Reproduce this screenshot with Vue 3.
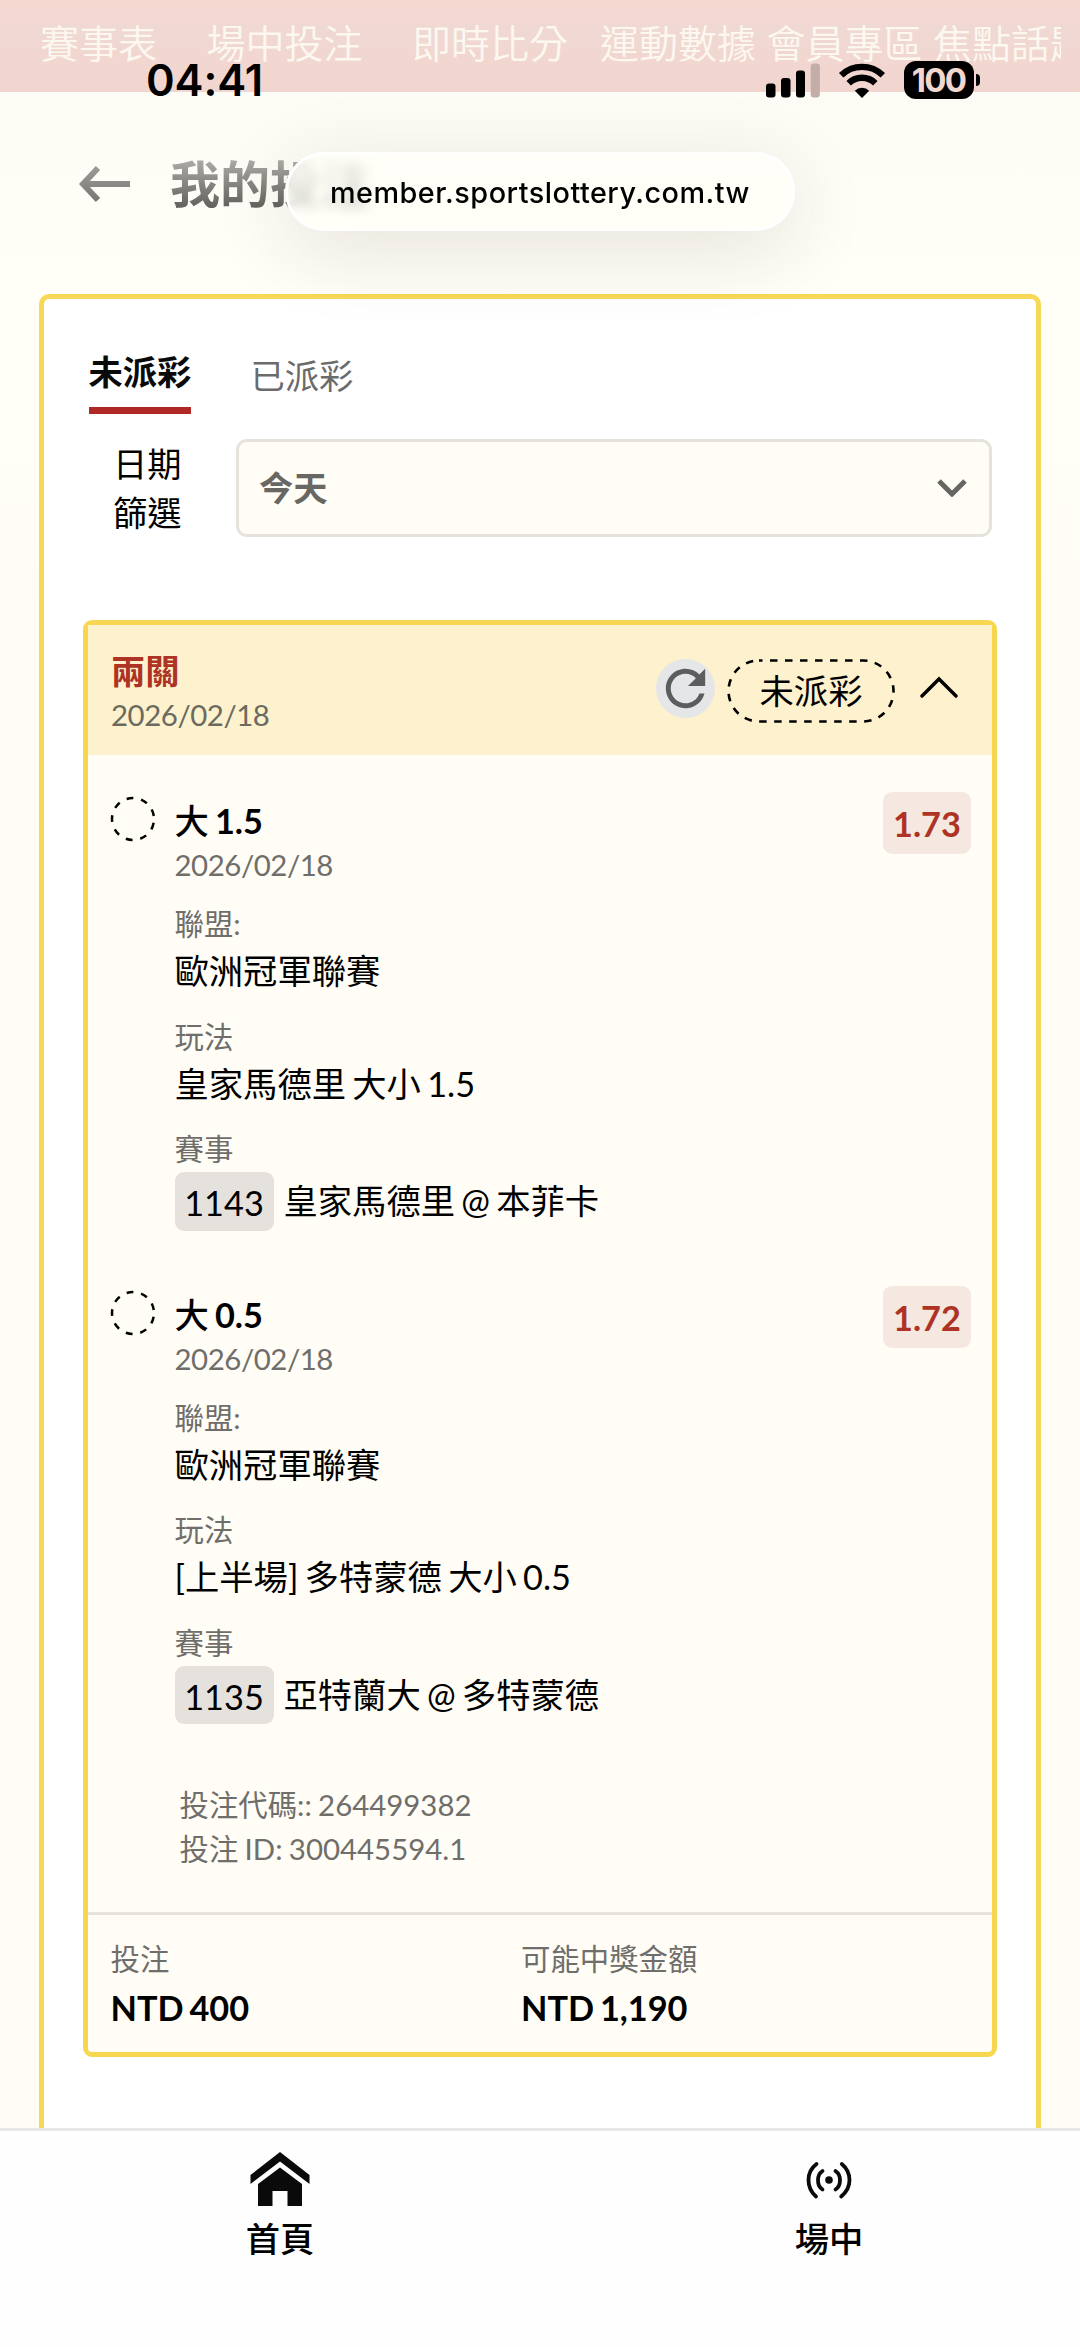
<script setup>
  import { ref } from 'vue'

  const navItems = [
    { name: '賽事表', size: 'wide' },
    { name: '場中投注', size: 'wide' },
    { name: '即時比分', size: 'mid' },
    { name: '運動數據', size: 'tight' },
    { name: '會員專區', size: 'tight' },
    { name: '焦點話題', size: 'tight' }
  ]

  const tabs = ['未派彩', '已派彩']
  const activeTab = ref('未派彩')
  const open = ref(true)

  const legs = [
    {
      side: '大',
      line: '1.5',
      date: '2026/02/18',
      odds: '1.73',
      league: '歐洲冠軍聯賽',
      market: '皇家馬德里 大小 1.5',
      code: '1143',
      match: '皇家馬德里 @ 本菲卡'
    },
    {
      side: '大',
      line: '0.5',
      date: '2026/02/18',
      odds: '1.72',
      league: '歐洲冠軍聯賽',
      market: '[上半場] 多特蒙德 大小 0.5',
      code: '1135',
      match: '亞特蘭大 @ 多特蒙德'
    }
  ]
</script>

<template>
  <div class="screen">
    <nav class="top-nav">
      <a v-for="item in navItems" :key="item.name" :class="item.size">{{ item.name }}</a>
    </nav>

    <header class="page-header">
      <svg class="back" width="52" height="38" viewBox="0 0 52 38">
        <defs>
          <linearGradient id="fade" x1="0" y1="0" x2="0" y2="38" gradientUnits="userSpaceOnUse">
            <stop offset="0" stop-color="#9d9c98" />
            <stop offset="1" stop-color="#777672" />
          </linearGradient>
        </defs>
        <path d="M19 3 L4 19 L19 35 M4 18.99 L51 19" fill="none" stroke="url(#fade)" stroke-width="6" />
      </svg>
      <h1>我的投注</h1>
    </header>

    <main class="panel">
      <div class="tabs">
        <button
          v-for="tab in tabs"
          :key="tab"
          :class="{ active: tab === activeTab }"
          @click="activeTab = tab"
        >{{ tab }}</button>
      </div>

      <div class="filter">
        <label>日期<br>篩選</label>
        <div class="select">
          <span>今天</span>
          <svg width="30" height="18" viewBox="0 0 30 18">
            <path d="M2 2 L15 15 L28 2" fill="none" stroke="#666561" stroke-width="5" />
          </svg>
        </div>
      </div>

      <section class="ticket">
        <div class="ticket-header">
          <div>
            <div class="ticket-title">兩關</div>
            <div class="date">2026/02/18</div>
          </div>
          <div class="actions">
            <button class="refresh">
              <svg width="59" height="59" viewBox="0 0 24 24">
                <path fill="#5b5d5f" d="M17.65 6.35C16.2 4.9 14.21 4 12 4c-4.42 0-7.99 3.58-7.99 8s3.57 8 7.99 8c3.73 0 6.84-2.55 7.73-6h-2.08c-.82 2.33-3.04 4-5.65 4-3.31 0-6-2.69-6-6s2.69-6 6-6c1.66 0 3.14.69 4.22 1.78L13 11h7V4l-2.35 2.35z" />
              </svg>
            </button>
            <div class="status">
              <svg width="168" height="64" viewBox="0 0 168 64">
                <rect x="1.5" y="1.5" width="165" height="61" rx="30.5" fill="none" stroke="#000" stroke-width="2.6" stroke-dasharray="7.5 7.5" stroke-dashoffset="4" />
              </svg>
              <span>未派彩</span>
            </div>
            <button class="toggle" @click="open = !open">
              <svg width="38" height="22" viewBox="0 0 38 22">
                <path d="M2 20 L19 3 L36 20" fill="none" stroke="#000" stroke-width="3.4" stroke-linecap="round" />
              </svg>
            </button>
          </div>
        </div>

        <div v-if="open" class="legs">
          <div v-for="leg in legs" :key="leg.code" class="leg">
            <svg class="pending" width="46" height="46" viewBox="0 0 46 46">
              <circle cx="23" cy="23" r="21" fill="none" stroke="#000" stroke-width="2.5" stroke-dasharray="6.8 7.86" stroke-dashoffset="-3.93" />
            </svg>
            <div class="leg-body">
              <div class="pick">{{ leg.side }} <b>{{ leg.line }}</b></div>
              <div class="date">{{ leg.date }}</div>
              <div class="field">
                <div class="label">聯盟:</div>
                <div class="value">{{ leg.league }}</div>
              </div>
              <div class="field">
                <div class="label">玩法</div>
                <div class="value">{{ leg.market }}</div>
              </div>
              <div class="field">
                <div class="label">賽事</div>
                <div class="match">
                  <span class="code">{{ leg.code }}</span>
                  <span class="value">{{ leg.match }}</span>
                </div>
              </div>
            </div>
            <div class="odds">{{ leg.odds }}</div>
          </div>
          <div class="ids">
            <div>投注代碼:: 264499382</div>
            <div>投注 ID: 300445594.1</div>
          </div>
        </div>

        <div class="amounts">
          <div>
            <div class="label">投注</div>
            <div class="amount">NTD 400</div>
          </div>
          <div>
            <div class="label">可能中獎金額</div>
            <div class="amount">NTD 1,190</div>
          </div>
        </div>
      </section>
    </main>

    <footer class="bottom-nav">
      <a>
        <svg width="60" height="56" viewBox="0 0 60 56">
          <path d="M30 0 L59.5 23 V32 L30 9.5 L0.5 32 V23 Z" fill="#0a0a0a" />
          <path d="M30 15.5 L52 32 V54 H37.5 V39 H22.5 V54 H8 V32 Z" fill="#0a0a0a" />
        </svg>
        <span>首頁</span>
      </a>
      <a>
        <svg width="60" height="56" viewBox="0 0 60 56">
          <g fill="none" stroke="#0a0a0a" stroke-width="3.8" stroke-linecap="round">
            <path d="M17.5 12 Q9.5 18 9.5 28 T17 44.5" />
            <path d="M23.5 19 Q19 22 19 28.2 T23.5 37.5" />
            <path d="M36.5 19 Q41 22 41 28.2 T36.5 37.5" />
            <path d="M42.8 12 Q50.5 18.5 50.5 28 T42.2 44.5" />
          </g>
          <circle cx="30" cy="28" r="3.8" fill="#0a0a0a" />
        </svg>
        <span>場中</span>
      </a>
    </footer>

    <!-- phone chrome floating over the page -->
    <div class="status-bar">
      <span class="time">04:41</span>
      <div class="indicators">
        <svg width="54" height="35" viewBox="0 0 54 35">
          <rect x="0" y="20.5" width="9.5" height="14" rx="3" />
          <rect x="15" y="15" width="9.5" height="19.5" rx="3" />
          <rect x="30" y="7.5" width="9" height="27" rx="3" />
          <rect x="44.7" y="0.5" width="9.2" height="34" rx="3" fill="#c2ada8" />
        </svg>
        <svg width="48" height="35" viewBox="0 0 48 35">
          <path d="M3.2 12.3 A30 30 0 0 1 44.8 12.3" fill="none" stroke="#000" stroke-width="6.4" />
          <path d="M10.7 20.2 A19 19 0 0 1 37.3 20.2" fill="none" stroke="#000" stroke-width="6.4" />
          <path d="M24 35 L16.8 27.8 A10.2 10.2 0 0 1 31.2 27.8 Z" />
        </svg>
        <div class="battery">100</div>
      </div>
    </div>
    <div class="address">member.sportslottery.com.tw</div>
  </div>
</template>

<style>
body {
  margin: 0;
}
</style>

<style scoped>
.screen {
  position: relative;
  display: flex;
  flex-direction: column;
  width: 1080px;
  height: 2347px;
  overflow: hidden;
  background: linear-gradient(#fbfaf4, #fffef7 300px, #fffdf6 600px);
  color: #000;
  font-family: Lato, "Noto Sans CJK TC", sans-serif;
  font-size: 34.3px;
}

.screen svg {
  display: block;
  flex: none;
}

button {
  border: 0;
  padding: 0;
  background: none;
  font: inherit;
}

.top-nav {
  display: flex;
  flex: none;
  box-sizing: border-box;
  height: 92px;
  padding-left: 40px;
  border-right: 19px solid transparent;
  background: linear-gradient(#f5d7d0, #f0d9d3 30px, #f2d6d0 60px, #f1d5cf);
  color: #fcf8f0;
  font-size: 39px;
  font-weight: 350;
  line-height: 86px;
  white-space: nowrap;
  overflow: hidden;
}

.top-nav .wide {
  margin-right: 49.5px;
}

.top-nav .mid {
  margin-right: 32px;
}

.top-nav .tight {
  margin-right: 10.5px;
}

.page-header {
  display: flex;
  flex: none;
  align-items: center;
  box-sizing: border-box;
  height: 202px;
  padding: 0 0 18px 79px;
}

.page-header h1 {
  margin: 0 0 0 39px;
  font-size: 50px;
  font-weight: 700;
  line-height: 64px;
  background: linear-gradient(#a9a8a4 15%, #64635f 85%);
  background-clip: text;
  color: transparent;
}

.panel {
  flex: 1;
  min-height: 0;
  margin: 0 39px;
  padding: 50px 39px 0;
  border: 5px solid #f8d957;
  border-bottom: 0;
  border-radius: 10px 10px 0 0;
  background: #fff;
}

.tabs {
  display: flex;
  gap: 59px;
  height: 65px;
  padding-left: 5.5px;
}

.tabs button {
  height: 40px;
  margin-top: 7px;
  line-height: 40px;
  color: #6b6b6b;
}

.tabs .active {
  height: 65px;
  margin-top: 0;
  padding: 0 0 12px;
  border-bottom: 7px solid #b02823;
  line-height: 46px;
  font-weight: 700;
  color: #0a0a0a;
}

.filter {
  display: flex;
  justify-content: space-between;
  margin-top: 25px;
  padding: 0 5px 0 30px;
  line-height: 49px;
}

.select {
  display: flex;
  align-items: center;
  justify-content: space-between;
  box-sizing: border-box;
  width: 756px;
  height: 98px;
  padding: 0 22px 0 20px;
  border: 3px solid #e6e3dc;
  border-radius: 11px;
  background: #fffdf6;
  color: #686763;
  font-weight: 700;
}

.select span {
  margin-bottom: 2px;
}

.ticket {
  margin-top: 83px;
  box-sizing: border-box;
  height: 1437px;
  border: 5px solid #f8d750;
  border-radius: 9px;
  background: #fffdf6;
}

.ticket-header {
  display: flex;
  justify-content: space-between;
  box-sizing: border-box;
  height: 130px;
  padding: 24px 34px 0 23px;
  background: #fdf2cd;
  line-height: 44px;
}

.ticket-title {
  color: #ae3324;
  font-weight: 700;
}

.date {
  color: #6b6a60;
  font-size: 29.4px;
  letter-spacing: -0.45px;
  line-height: 44px;
}

.actions {
  display: flex;
  align-items: center;
  height: 84px;
}

.refresh {
  margin: 0 12px 5px 0;
  border-radius: 50%;
  background: #e4e6e8;
}

.status {
  position: relative;
  display: grid;
  place-items: center;
  width: 168px;
  height: 64px;
}

.status svg {
  position: absolute;
  inset: 0;
}

.toggle {
  margin: 0 0 8px 25px;
}

.legs {
  padding: 44px 21px 0 21.5px;
}

.leg {
  display: flex;
  margin-bottom: 62px;
}

.pending {
  margin: -3px 19px 0 0;
}

.leg-body {
  flex: 1;
}

.pick {
  font-weight: 500;
  line-height: 44px;
  word-spacing: -2.5px;
}

.leg .date,
.label,
.ids {
  color: #6f6e6b;
}

.field {
  margin-top: 15px;
}

.field + .field {
  margin-top: 18.5px;
}

.label {
  font-size: 29.4px;
  line-height: 44px;
}

.value {
  line-height: 50px;
  word-spacing: -2.5px;
}

.match {
  display: flex;
  align-items: center;
  margin-top: 1px;
}

.match .value {
  margin-left: 10px;
}

.code {
  box-sizing: border-box;
  width: 99px;
  height: 58.5px;
  border-radius: 9px;
  background: #e5e2dd;
  line-height: 61px;
  text-align: center;
}

.odds {
  width: 88px;
  height: 62px;
  margin-top: -7px;
  border-radius: 9px;
  background: #f5e8e0;
  color: #ae3324;
  font-weight: 700;
  line-height: 63px;
  text-align: center;
}

.ids {
  padding-left: 70px;
  margin-top: -3px;
  font-size: 29.4px;
  line-height: 44px;
  word-spacing: -1.2px;
}

.amounts {
  display: grid;
  grid-template-columns: 410.5px 1fr;
  margin-top: 41px;
  padding: 22px 0 0 22.5px;
  border-top: 3px solid #e6e3dc;
}

.amount {
  padding-top: 2px;
  font-weight: 700;
  line-height: 50px;
  word-spacing: -2.5px;
}

.bottom-nav {
  display: grid;
  flex: none;
  grid-template-columns: 549px 549px;
  box-sizing: border-box;
  height: 219px;
  padding: 21px 0 0 5.5px;
  border-top: 3px solid #e8e8e8;
  background: #fefefe;
  font-weight: 500;
}

.bottom-nav a {
  display: flex;
  flex-direction: column;
  align-items: center;
  line-height: 48px;
}

.bottom-nav span {
  margin-top: 7px;
}

.status-bar {
  position: absolute;
  top: 59px;
  left: 146px;
  right: 100px;
  display: flex;
  align-items: center;
  justify-content: space-between;
  height: 42px;
  font-family: Inter, sans-serif;
}

.time {
  font-size: 43.5px;
  font-weight: 600;
  letter-spacing: -0.1px;
}

.indicators {
  display: flex;
  align-items: center;
  gap: 18px;
}

.battery {
  position: relative;
  width: 70px;
  height: 38px;
  margin-right: 6.5px;
  border-radius: 12px;
  background: #000;
  color: #f2d6d0;
  font-size: 33px;
  font-weight: 700;
  letter-spacing: -1.8px;
  line-height: 38px;
  text-align: center;
}

.battery::after {
  content: "";
  position: absolute;
  top: 13px;
  right: -6.5px;
  width: 4.5px;
  height: 12px;
  border-radius: 0 6px 6px 0;
  background: #000;
}

.address {
  position: absolute;
  top: 152px;
  left: 285px;
  box-sizing: border-box;
  width: 510px;
  height: 79px;
  border: 3px solid #fff;
  border-radius: 40px;
  background: rgba(255, 255, 248, 0.72);
  backdrop-filter: blur(6px);
  box-shadow: 0 18px 80px rgba(60, 55, 40, 0.13);
  font-family: Inter, sans-serif;
  font-size: 28.8px;
  font-weight: 500;
  letter-spacing: 0.5px;
  line-height: 75px;
  text-align: center;
  white-space: nowrap;
}
</style>
